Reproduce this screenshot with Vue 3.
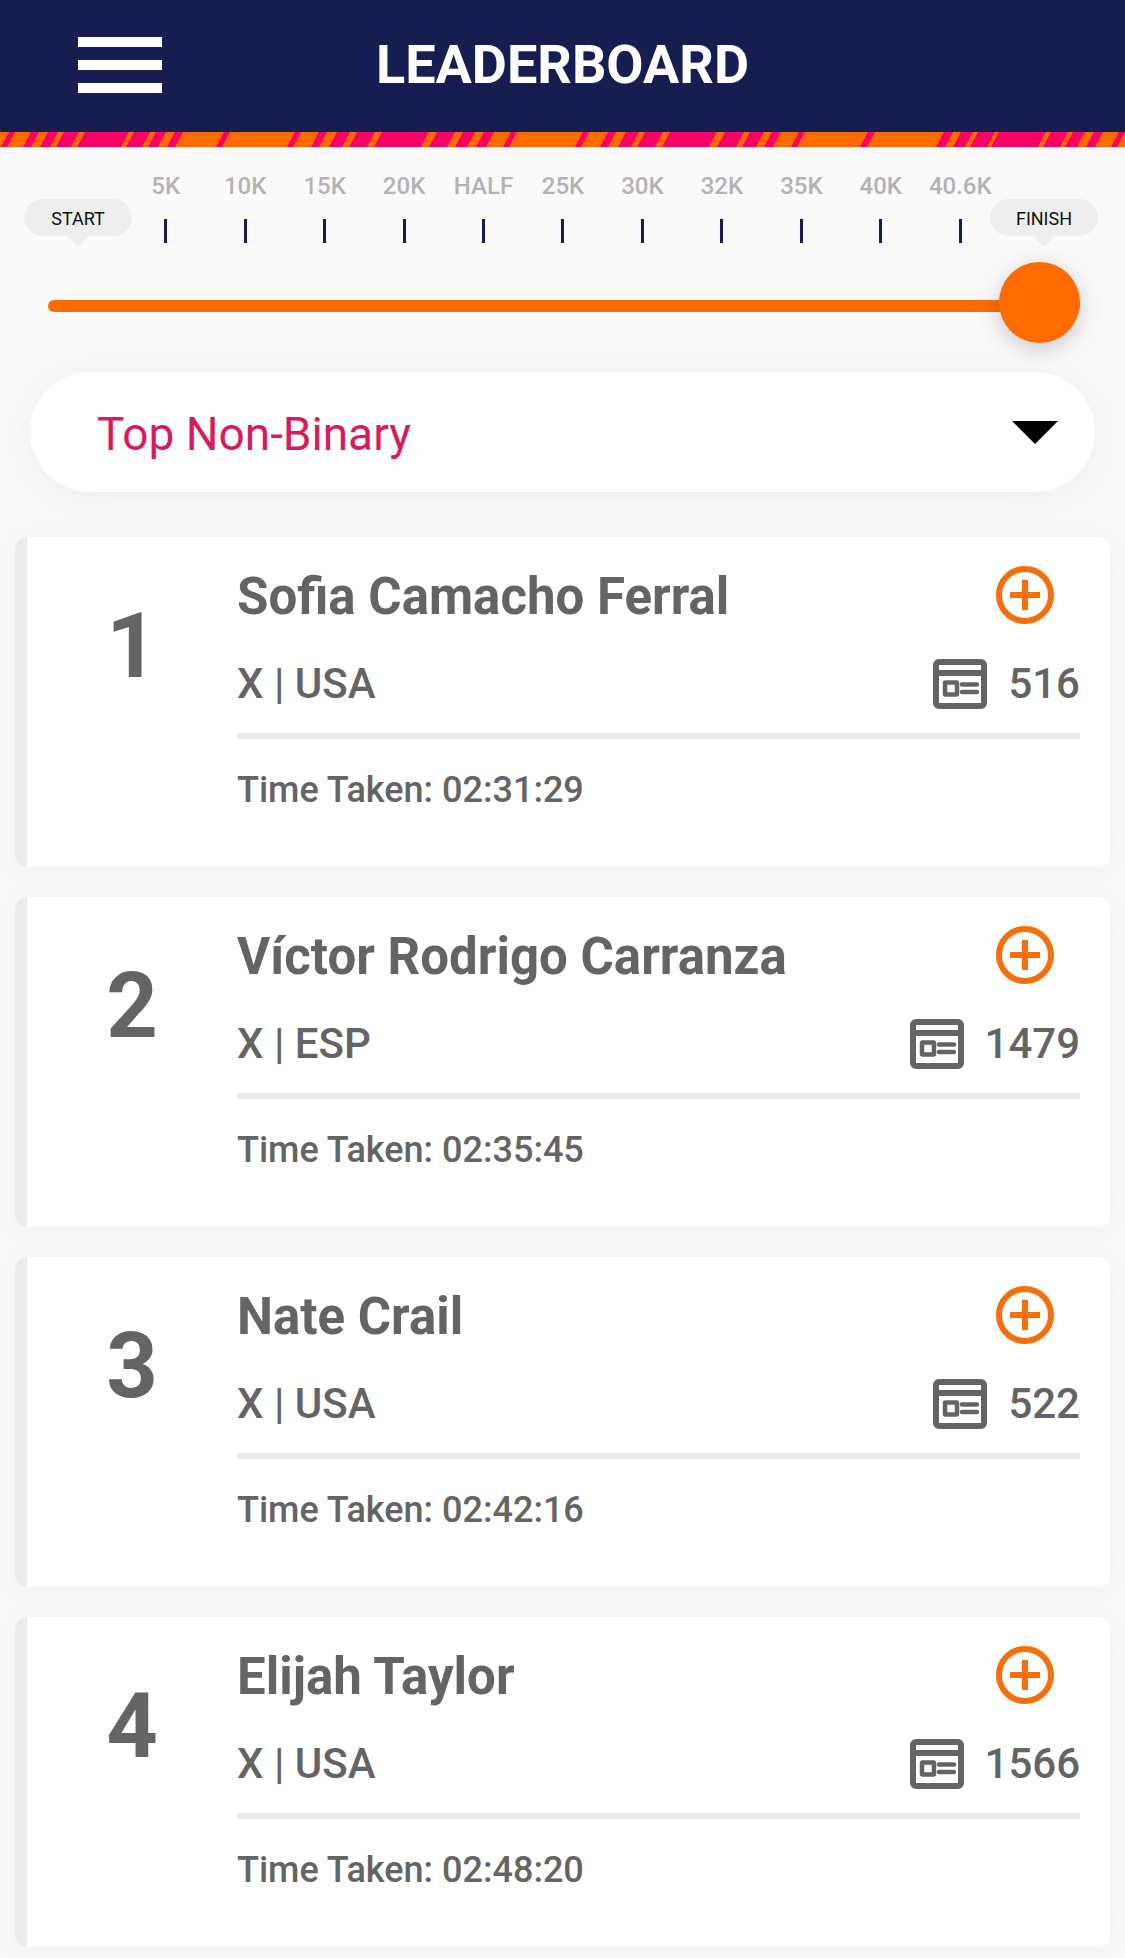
<script setup>
import { ref } from 'vue'

const distances = ['5K', '10K', '15K', '20K', 'HALF', '25K', '30K', '32K', '35K', '40K', '40.6K']
const progress = ref(100)
const category = ref('Top Non-Binary')

const runners = [
  { rank: 1, name: 'Sofia Camacho Ferral', country: 'USA', bib: 516, time: '02:31:29' },
  { rank: 2, name: 'Víctor Rodrigo Carranza', country: 'ESP', bib: 1479, time: '02:35:45' },
  { rank: 3, name: 'Nate Crail', country: 'USA', bib: 522, time: '02:42:16' },
  { rank: 4, name: 'Elijah Taylor', country: 'USA', bib: 1566, time: '02:48:20' },
]

// Pink bands of the header ribbon: start and end along its centre line
const bands = [
  [5, 11], [27, 35], [44, 54], [60, 75], [81, 125], [130, 146], [152, 162], [171, 179],
  [220, 226], [291, 297], [315, 323], [333, 346], [353, 371], [378, 425], [433, 451],
  [459, 471], [480, 490], [507, 513], [579, 585], [604, 612], [622, 635], [641, 659],
  [666, 713], [721, 740], [746, 760], [768, 777], [795, 801], [864, 871], [940, 949],
  [957, 969], [974, 991], [995, 1042], [1047, 1064], [1069, 1081], [1090, 1099], [1115, 1121],
]
const ribbon = bands.map(([a, b]) => `M${a + 4} 0H${b + 4}L${b - 4} 15H${a - 4}Z`).join('')
</script>

<template>
  <div class="app">
    <header class="header">
      <button class="menu" type="button" aria-label="Menu">
        <span></span><span></span><span></span>
      </button>
      <h1>LEADERBOARD</h1>
    </header>
    <svg class="ribbon" viewBox="0 0 1125 15" preserveAspectRatio="none" aria-hidden="true">
      <path :d="ribbon" fill="#fb0064" />
    </svg>

    <section class="course">
      <div class="scale">
        <span class="bubble">START</span>
        <ol class="marks">
          <li v-for="d in distances" :key="d">{{ d }}</li>
        </ol>
        <span class="bubble">FINISH</span>
      </div>
      <input v-model="progress" class="slider" type="range" min="0" max="100" aria-label="Course position" />
    </section>

    <div class="picker">
      <select v-model="category" aria-label="Category">
        <option>Top Non-Binary</option>
      </select>
      <svg class="arrow" viewBox="0 0 46 23" aria-hidden="true"><path d="M0 0h46L23 23z" /></svg>
    </div>

    <main class="list">
      <article v-for="r in runners" :key="r.rank" class="card">
        <div class="rank">{{ r.rank }}</div>
        <div class="details">
          <div class="row">
            <h2>{{ r.name }}</h2>
            <button class="add" type="button" :aria-label="'Follow ' + r.name">
              <svg viewBox="0 0 60 60" fill="none" stroke="#f56f0c">
                <circle cx="30" cy="30" r="26" stroke-width="6" />
                <path d="M30 15v30M15 30h30" stroke-width="6" />
              </svg>
            </button>
          </div>
          <div class="row meta">
            <span>X | {{ r.country }}</span>
            <span class="bib">
              <svg viewBox="0 0 54 50" fill="none" stroke="#646464" aria-hidden="true">
                <rect x="3" y="3" width="48" height="44" rx="3" stroke-width="6" />
                <path d="M3 14h48" stroke-width="6" />
                <rect x="12" y="23.5" width="12" height="12" rx="0.5" stroke-width="4.5" />
                <path d="M29 25.5h15M29 33h15" stroke-width="4.5" stroke-linecap="round" />
              </svg>
              {{ r.bib }}
            </span>
          </div>
          <div class="time">Time Taken: {{ r.time }}</div>
        </div>
      </article>
    </main>
  </div>
</template>

<style>
body {
  background: #fafafa;
}
</style>

<style scoped>
.app {
  font-family: Roboto, "Liberation Sans", sans-serif;
  color: #646464;
  overflow: hidden;
}

button {
  padding: 0;
  border: 0;
  background: none;
}

h1,
h2 {
  margin: 0;
}

.header {
  display: grid;
  grid-template-columns: 84px 1fr 84px;
  align-items: center;
  height: 132px;
  padding: 0 78px 2px;
  box-sizing: border-box;
  background: #161d51;
}

.menu {
  display: flex;
  flex-direction: column;
  gap: 13px;
}

.menu span {
  height: 10px;
  width: 84px;
  background: #fff;
}

h1 {
  color: #fff;
  font-size: 54px;
  font-weight: 700;
  line-height: 64px;
  text-align: center;
}

.ribbon {
  display: block;
  width: 100%;
  height: 15px;
  background: #ff6b00;
}

.scale {
  display: flex;
  align-items: flex-start;
  padding: 24px 27px 0 24px;
}

.bubble {
  position: relative;
  flex: none;
  width: 108px;
  height: 37px;
  margin-top: 28px;
  border-radius: 19px;
  background: #eee;
  color: #111;
  font-size: 18px;
  line-height: 40px;
  text-align: center;
}

.bubble::after {
  content: "";
  position: absolute;
  top: 100%;
  left: 50%;
  margin-left: -11px;
  border: 11px solid transparent;
  border-top-color: #eee;
  border-bottom: 0;
}

.marks {
  display: flex;
  flex: 1;
  margin: 0 -10px 0 -6px;
  padding: 0;
  list-style: none;
}

.marks li {
  display: flex;
  flex: 1 1 0;
  min-width: 0;
  flex-direction: column;
  align-items: center;
  gap: 18px;
  color: #b3b3b3;
  font-size: 24px;
  font-weight: 500;
  line-height: 30px;
}

.marks li::after {
  content: "";
  width: 3px;
  height: 24px;
  background: #161d51;
}

.slider {
  appearance: none;
  display: block;
  width: calc(100% - 93px);
  height: 81px;
  margin: 19px 45px 0 48px;
  background: none;
}

.slider::-webkit-slider-runnable-track {
  height: 12px;
  margin-top: 7px;
  border-radius: 6px;
  background: #ff6b00;
}

.slider::-webkit-slider-thumb {
  appearance: none;
  width: 81px;
  height: 81px;
  margin-top: -38px;
  border-radius: 50%;
  background: #ff6b00;
  box-shadow: 0 6px 24px rgba(0, 0, 0, 0.2);
}

.picker {
  display: grid;
  align-items: center;
  height: 120px;
  margin: 29px 30px 45px;
  border-radius: 60px;
  background: #fff;
  box-shadow: 0 6px 36px rgba(0, 0, 0, 0.06);
}

.picker select {
  grid-area: 1 / 1;
  appearance: none;
  width: 100%;
  height: 120px;
  padding: 4px 67px 0;
  border: 0;
  border-radius: 60px;
  background: none;
  color: #d81b60;
  font: 46px/56px Roboto, "Liberation Sans", sans-serif;
}

.arrow {
  grid-area: 1 / 1;
  justify-self: end;
  width: 46px;
  height: 23px;
  margin-right: 37px;
  pointer-events: none;
}

.list {
  display: flex;
  flex-direction: column;
  gap: 30px;
  padding: 0 15px 11px;
}

.card {
  display: flex;
  height: 330px;
  border-left: 12px solid #ebebeb;
  border-radius: 12px;
  background: #fff;
  box-shadow: 0 3px 30px rgba(0, 0, 0, 0.05);
  box-sizing: border-box;
}

.rank {
  width: 210px;
  padding-top: 56px;
  box-sizing: border-box;
  font-size: 90px;
  font-weight: 700;
  line-height: 108px;
  text-align: center;
}

.details {
  flex: 1;
  padding: 23px 30px 0 0;
}

.row {
  display: flex;
  align-items: center;
  justify-content: space-between;
}

h2 {
  padding-top: 4px;
  font-size: 51px;
  font-weight: 700;
  line-height: 66px;
}

.add {
  width: 60px;
  height: 60px;
  margin-right: 25px;
}

.add svg {
  display: block;
}

.meta {
  height: 109px;
  padding-top: 4px;
  box-sizing: border-box;
  border-bottom: 6px solid #ebebeb;
  font-size: 42px;
  font-weight: 500;
}

.bib {
  display: flex;
  align-items: center;
  gap: 21px;
}

.bib svg {
  width: 54px;
  height: 50px;
}

.time {
  margin-top: 27px;
  font-size: 36px;
  font-weight: 500;
  line-height: 48px;
}
</style>
